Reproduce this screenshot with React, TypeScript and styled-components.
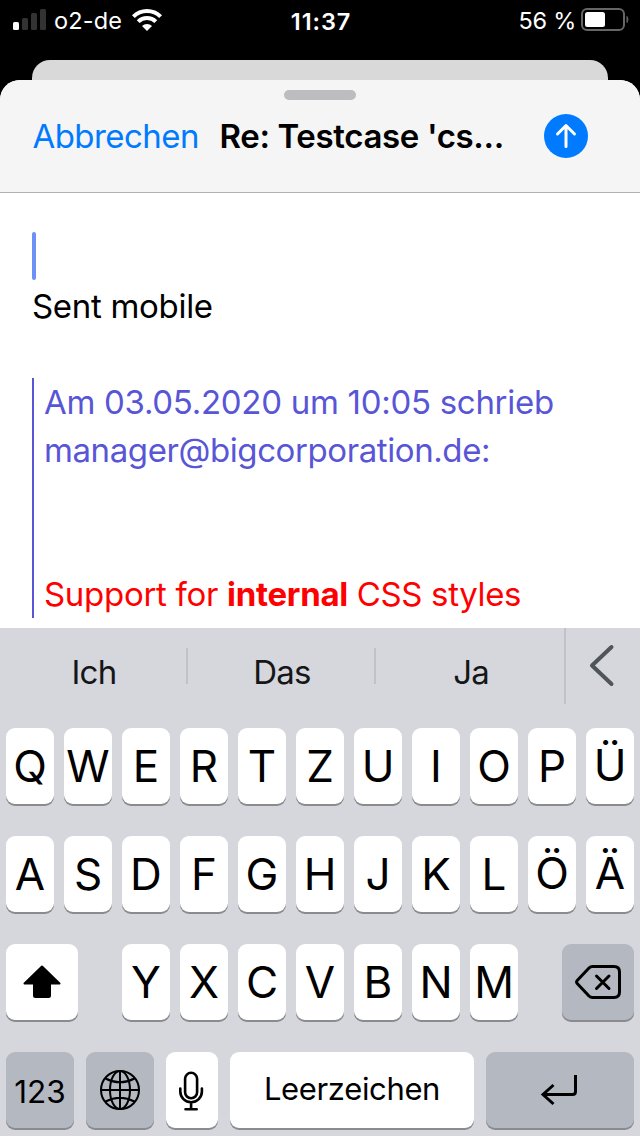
import React from "react";
import styled, { createGlobalStyle } from "styled-components";

const Global = createGlobalStyle`
  * { box-sizing: border-box; }
  body { margin: 0; background: #000; font-family: Inter, "Liberation Sans", sans-serif; }
`;

const Phone = styled.main`
  width: 640px;
  height: 1136px;
  overflow: hidden;
  display: flex;
  flex-direction: column;
  background: #000;
`;

const Label = styled.span<{ $size: number; $track?: number; $weight?: number }>`
  font-size: ${(p) => p.$size}px;
  letter-spacing: ${(p) => p.$track ?? 0}px;
  font-weight: ${(p) => p.$weight ?? 400};
  white-space: pre;
`;

const StatusBar = styled.header`
  height: 60px;
  padding: 0 11px 20px 13px;
  display: grid;
  grid-template-columns: 1fr auto 1fr;
  align-items: center;
  color: #fff;
`;

const StatusGroup = styled.div<{ $end?: boolean }>`
  display: flex;
  align-items: center;
  justify-content: ${(p) => (p.$end ? "flex-end" : "flex-start")};
`;

const Clock = styled.time`
  padding-top: 2px;
`;

const Signal = styled.div`
  display: flex;
  align-items: flex-end;
  gap: 3px;
  height: 21px;
  margin: 0 8px 2px 0;
`;

const SignalBar = styled.i<{ $h: number; $on?: boolean }>`
  width: 6px;
  height: ${(p) => p.$h}px;
  border-radius: 1.5px;
  background: ${(p) => (p.$on ? "#fff" : "#333")};
`;

const BackSheet = styled.div`
  height: 20px;
  flex: none;
  margin: 0 32px;
  border-radius: 18px 18px 0 0;
  background: #d9d9d9;
`;

const Sheet = styled.section`
  height: 548px;
  flex: none;
  border-radius: 20px 20px 0 0;
  overflow: hidden;
  background: #fff;
`;

const SheetHeader = styled.div`
  height: 113px;
  padding-top: 10px;
  background: #f5f5f5;
  border-bottom: 1px solid #b1b1b2;
`;

const Grabber = styled.div`
  width: 72px;
  height: 10px;
  margin: 0 auto;
  border-radius: 5px;
  background: #bdbdbf;
`;

const TitleRow = styled.div`
  display: flex;
  align-items: center;
  height: 44px;
  margin-top: 14px;
  padding: 0 52px 0 32.5px;
`;

const Cancel = styled.button`
  width: 187px;
  padding: 0;
  border: 0;
  background: none;
  color: #007aff;
  font-family: inherit;
  text-align: left;
`;

const Title = styled.h1`
  margin: 0;
  flex: 1;
  line-height: 44px;
  color: #000;
`;

const Send = styled.button`
  width: 44px;
  height: 44px;
  padding: 0;
  border: 0;
  border-radius: 50%;
  background: #007aff;
`;

const Message = styled.div`
  padding: 39px 32px 0;
  line-height: 48px;
`;

const Caret = styled.div`
  width: 4px;
  height: 48px;
  margin-bottom: 2px;
  border-radius: 2px;
  background: #6e91f6;
`;

const Line = styled.p<{ $color?: string }>`
  margin: 0;
  height: 48px;
  color: ${(p) => p.$color ?? "#000"};
`;

const Quote = styled.blockquote`
  margin: 48px 0 0;
  padding-left: 10px;
  border-left: 2px solid #5856d6;
`;

const Keyboard = styled.section`
  height: 508px;
  flex: none;
  background: #d6d7dd;
`;

const Suggestions = styled.div`
  display: flex;
  height: 76px;
  margin-bottom: 24px;
`;

const Suggestion = styled.div<{ $w: number }>`
  width: ${(p) => p.$w}px;
  padding: 12px 0 0 2px;
  line-height: 64px;
  text-align: center;
  color: #151617;
`;

const Divider = styled.i<{ $full?: boolean }>`
  width: 2px;
  height: ${(p) => (p.$full ? 76 : 36)}px;
  margin-top: ${(p) => (p.$full ? 0 : 20)}px;
  background: #c0c2c7;
`;

const Collapse = styled.div`
  flex: 1;
  padding: 14px 0 0 22px;
`;

const KeyRow = styled.div<{ $gap?: number }>`
  display: flex;
  gap: ${(p) => p.$gap ?? 10}px;
  padding: 0 6px;
  margin-bottom: 32px;
`;

const Key = styled.div<{ $w?: number; $dark?: boolean; $ml?: number; $up?: number; $down?: number }>`
  width: ${(p) => p.$w ?? 48}px;
  height: 76px;
  flex: none;
  margin-left: ${(p) => p.$ml ?? 0}px;
  padding: ${(p) => p.$down ?? 0}px 0 ${(p) => p.$up ?? 0}px;
  display: flex;
  align-items: center;
  justify-content: center;
  border-radius: 9px;
  background: ${(p) => (p.$dark ? "#b3b8c1" : "#fff")};
  box-shadow: 0 2px 0 #8a8b8f;
  color: #000;
`;

const Icon = styled.svg<{ $ml?: number; $mr?: number }>`
  display: block;
  flex: none;
  overflow: visible;
  margin-left: ${(p) => p.$ml ?? 0}px;
  margin-right: ${(p) => p.$mr ?? 0}px;
`;

const LetterKey = ({ c, ml }: { c: string; ml?: number }) => (
  <Key $ml={ml} $up={"ÜÖÄ".includes(c) ? 2 : 0}>
    <Label $size={44}>{c}</Label>
  </Key>
);

export default function App() {
  return (
    <Phone>
      <Global />
      <StatusBar>
        <StatusGroup>
          <Signal>
            <SignalBar $h={8} $on />
            <SignalBar $h={12} />
            <SignalBar $h={17} />
            <SignalBar $h={21} />
          </Signal>
          <Label $size={23.5} $track={0.15}>o2-de</Label>
          <Icon $ml={10} width="30" height="22" viewBox="0 0 30 22" fill="none" stroke="#fff" strokeWidth="4">
            <path d="M1.400 7.600A19.300 19.300 0 0 1 28.600 7.600" />
            <path d="M6.200 12.600A12.500 12.500 0 0 1 23.800 12.600" />
            <path d="M15 22L10 17A7 7 0 0 1 20 17Z" fill="#fff" stroke="none" />
          </Icon>
        </StatusGroup>
        <Clock><Label $size={23.5} $weight={600} $track={0.9}>11:37</Label></Clock>
        <StatusGroup $end>
          <Label $size={23.5} $track={-0.25}>56 %</Label>
          <Icon $ml={5} width="48" height="24" viewBox="0 0 48 24">
            <rect x="1" y="1" width="42" height="21" rx="5" fill="none" stroke="#666" strokeWidth="2" />
            <rect x="4" y="4" width="20" height="15" rx="2.5" fill="#fff" />
            <path d="M46 8.500Q48 11.500 46 14.500Z" fill="#666" stroke="#666" />
          </Icon>
        </StatusGroup>
      </StatusBar>
      <BackSheet />
      <Sheet>
        <SheetHeader>
          <Grabber />
          <TitleRow>
            <Cancel><Label $size={33} $track={-0.55}>Abbrechen</Label></Cancel>
            <Title><Label $size={33} $weight={600} $track={-0.36}>Re: Testcase 'cs...</Label></Title>
            <Send aria-label="Senden">
              <Icon width="44" height="44" viewBox="0 0 44 44" fill="none" stroke="#fff" strokeWidth="3" strokeLinecap="round" strokeLinejoin="round">
                <path d="M22 32.500V11.500M13.500 20L22 11.500L30.500 20" />
              </Icon>
            </Send>
          </TitleRow>
        </SheetHeader>
        <Message>
          <Caret />
          <Line><Label $size={33} $track={-0.3}>Sent mobile</Label></Line>
          <Quote>
            <Line $color="#5856d6"><Label $size={33} $track={-0.29}>Am 03.05.2020 um 10:05 schrieb</Label></Line>
            <Line $color="#5856d6"><Label $size={33} $track={-0.41}>manager@bigcorporation.de:</Label></Line>
            <Line />
            <Line />
            <Line $color="#ff0000">
              <Label $size={33} $track={-0.3}>Support for </Label>
              <Label $size={33} $weight={700} $track={-0.3}>internal</Label>
              <Label $size={33} $track={-0.36}> CSS styles</Label>
            </Line>
          </Quote>
        </Message>
      </Sheet>
      <Keyboard>
        <Suggestions>
          <Suggestion $w={186}><Label $size={33} $track={-0.7}>Ich</Label></Suggestion>
          <Divider />
          <Suggestion $w={186}><Label $size={33} $track={-0.7}>Das</Label></Suggestion>
          <Divider />
          <Suggestion $w={188}><Label $size={33} $track={-0.9}>Ja</Label></Suggestion>
          <Divider $full />
          <Collapse>
            <Icon width="30" height="48" viewBox="0 0 30 48" fill="none" stroke="#50555a" strokeWidth="4" strokeLinecap="round" strokeLinejoin="round">
              <path d="M23.500 5L4 23.500L23.500 42" />
            </Icon>
          </Collapse>
        </Suggestions>
        <KeyRow>{[..."QWERTZUIOPÜ"].map((c) => <LetterKey key={c} c={c} />)}</KeyRow>
        <KeyRow>{[..."ASDFGHJKLÖÄ"].map((c) => <LetterKey key={c} c={c} />)}</KeyRow>
        <KeyRow>
          <Key $w={72}>
            <Icon width="38" height="34" viewBox="0 0 38 34" strokeLinejoin="round" stroke="#000" strokeWidth="2">
              <path d="M19 1.500L36.500 18.500H27V30.500Q27 32 25.500 32H12.500Q11 32 11 30.500V18.500H1.500Z" />
            </Icon>
          </Key>
          {[..."YXCVBNM"].map((c, i) => <LetterKey key={c} c={c} ml={i ? 0 : 34} />)}
          <Key $w={72} $dark $ml={34}>
            <Icon width="46" height="34" viewBox="0 0 46 34" fill="none" stroke="#000" strokeWidth="3" strokeLinecap="round" strokeLinejoin="round">
              <path d="M17.500 1.500H39Q44.500 1.500 44.500 7V27Q44.500 32.500 39 32.500H17.500Q15.500 32.500 14 31L2.200 18.500Q1 17 2.200 15.500L14 3Q15.500 1.500 17.500 1.500Z" />
              <path d="M21.500 11L34 23.500M34 11L21.500 23.500" />
            </Icon>
          </Key>
        </KeyRow>
        <KeyRow $gap={12}>
          <Key $w={68} $dark $down={3}><Label $size={31.5}>123</Label></Key>
          <Key $w={68} $dark>
            <Icon width="40" height="40" viewBox="0 0 40 40" fill="none" stroke="#000" strokeWidth="2">
              <circle cx="20" cy="20" r="19" />
              <ellipse cx="20" cy="20" rx="10" ry="19" />
              <path d="M20 1V39M1 20H39M5.500 8.500Q20 16 34.500 8.500M5.500 31.500Q20 24 34.500 31.500" />
            </Icon>
          </Key>
          <Key $w={52} $down={1}>
            <Icon $mr={2} width="24" height="40" viewBox="0 0 24 40" fill="none" stroke="#000" strokeWidth="2.600" strokeLinecap="round">
              <rect x="6.100" y="1.800" width="12" height="25.500" rx="6" />
              <path d="M1.300 17.500V20.500A10.800 10.800 0 0 0 22.900 20.500V17.500M12.100 31.500V38M6.500 38.200H17.700" />
            </Icon>
          </Key>
          <Key $w={244} $up={3}><Label $size={31} $track={-0.35}>Leerzeichen</Label></Key>
          <Key $w={148} $dark>
            <Icon $mr={2} width="36" height="30" viewBox="0 0 36 30" fill="none" stroke="#000" strokeWidth="3">
              <path d="M34.500 0V16.500Q34.500 19.500 31.500 19.500H2M12.500 10L2 19.500L12.500 29" />
            </Icon>
          </Key>
        </KeyRow>
      </Keyboard>
    </Phone>
  );
}
